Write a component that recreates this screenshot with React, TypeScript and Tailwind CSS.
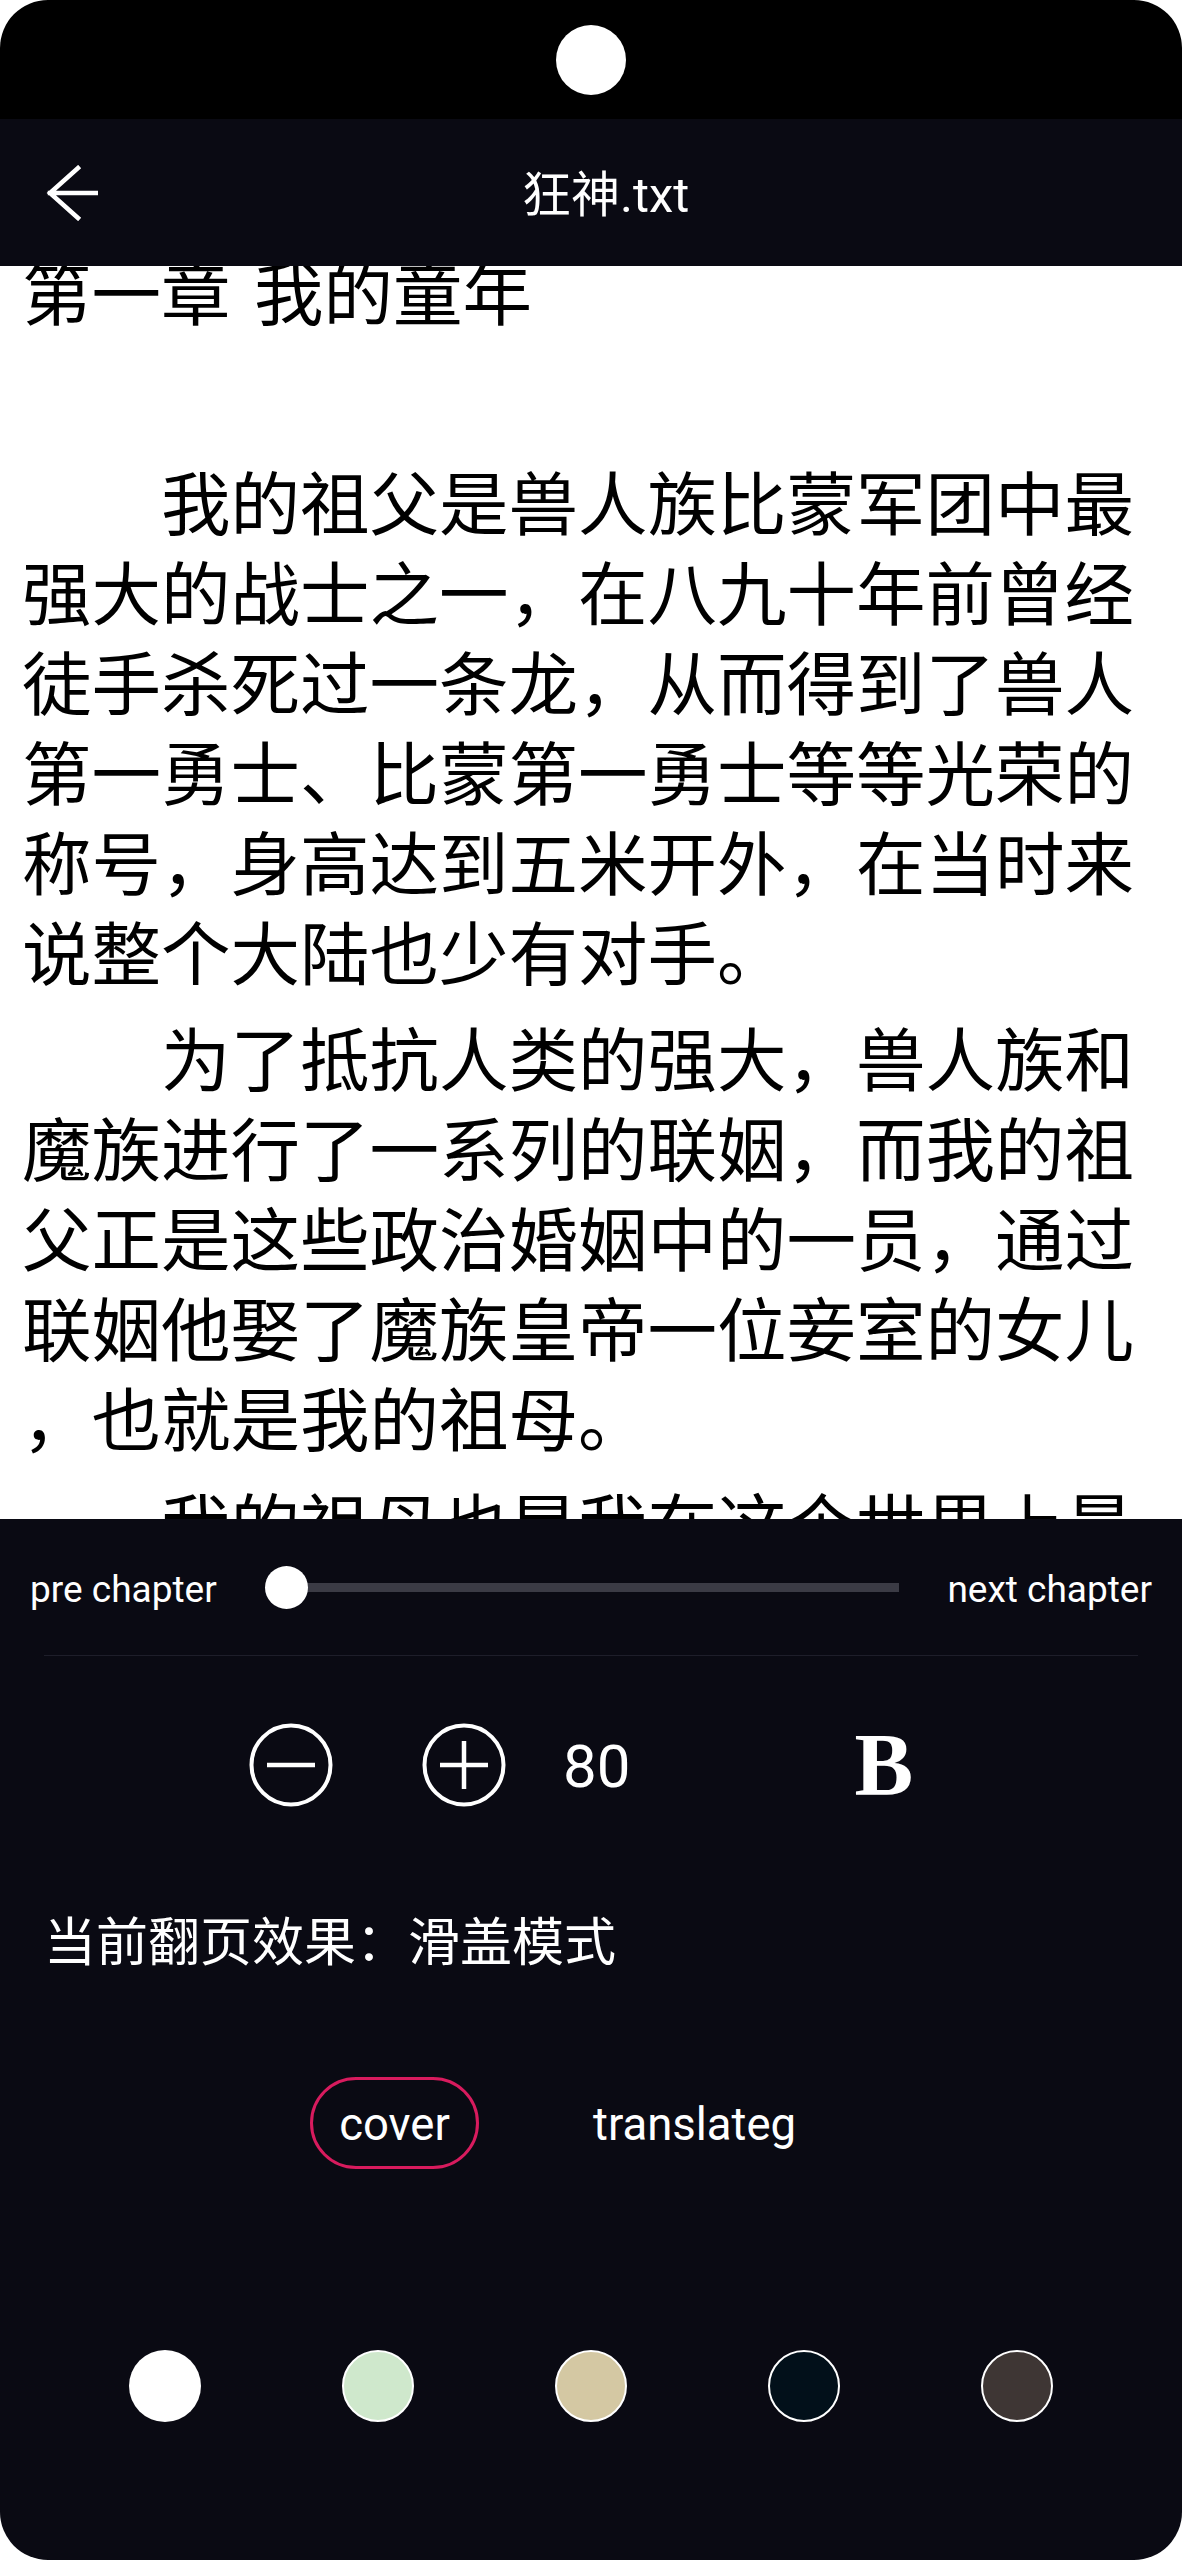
import React from "react";

const cjk = "font-['Noto_Sans_CJK_SC',sans-serif]";
const latin = "font-['Roboto','Noto_Sans_CJK_SC',sans-serif]";

const paragraphs = [
  "我的祖父是兽人族比蒙军团中最强大的战士之一，在八九十年前曾经徒手杀死过一条龙，从而得到了兽人第一勇士、比蒙第一勇士等等光荣的称号，身高达到五米开外，在当时来说整个大陆也少有对手。",
  "为了抵抗人类的强大，兽人族和魔族进行了一系列的联姻，而我的祖父正是这些政治婚姻中的一员，通过联姻他娶了魔族皇帝一位妾室的女儿，也就是我的祖母。",
  "我的祖母也是我在这个世界上最",
];

const swatches = [
  { bg: "bg-white", ring: "" },
  { bg: "bg-[#cfe8cc]", ring: "border-[2px] border-white" },
  { bg: "bg-[#d4c8a3]", ring: "border-[2px] border-white" },
  { bg: "bg-[#02101a]", ring: "border-[2px] border-white" },
  { bg: "bg-[#3e3634]", ring: "border-[2px] border-white" },
];

function BackArrow() {
  return (
    <svg width="52" height="56" viewBox="0 0 52 56" className="ml-[46px]">
      <path
        d="M32 3 L4 28 L32 53 M4 28 H50"
        fill="none"
        stroke="white"
        strokeWidth="4.5"
        strokeLinecap="square"
        strokeLinejoin="miter"
      />
    </svg>
  );
}

function CircleIcon({ plus }: { plus?: boolean }) {
  return (
    <svg width="84" height="84" viewBox="0 0 84 84">
      <circle cx="42" cy="42" r="39.5" fill="none" stroke="white" strokeWidth="4" />
      <line x1="18" y1="42" x2="66" y2="42" stroke="white" strokeWidth="4.5" />
      {plus && <line x1="42" y1="18" x2="42" y2="66" stroke="white" strokeWidth="4.5" />}
    </svg>
  );
}

export default function App() {
  return (
    <div className="w-[1182px] h-[2560px] bg-white">
      <div className="w-full h-full rounded-[48px] overflow-hidden flex flex-col">
        {/* status bar */}
        <div className="h-[119px] bg-black flex items-center justify-center shrink-0">
          <div className="w-[70px] h-[70px] rounded-full bg-white" />
        </div>

        {/* toolbar */}
        <div className="h-[147px] bg-[#0a0a13] flex items-center shrink-0">
          <BackArrow />
          <span className={`ml-[424px] mt-[5px] text-white text-[49px] leading-none ${latin}`}>
            狂神.txt
          </span>
        </div>

        {/* page text */}
        <div className="h-[1253px] bg-white overflow-hidden shrink-0">
          <div
            className={`-mt-[21px] pl-[22px] w-[1145px] text-black text-[69.5px] leading-[90px] [line-break:anywhere] ${cjk}`}
          >
            <p className="mb-[14px] [word-spacing:8px]">第一章 我的童年</p>
            <p className="mb-[16px] h-[90px]"></p>
            {paragraphs.map((t, i) => (
              <p key={i} className="mb-[16px] indent-[2em]">
                {t}
              </p>
            ))}
          </div>
        </div>

        {/* settings panel */}
        <div className="flex-1 bg-[#0a0a13] flex flex-col text-white">
          <div className={`h-[136px] flex items-center px-[30px] text-[37px] leading-none ${latin}`}>
            <span className="mt-[4px]">pre chapter</span>
            <div className="relative flex-1 mx-[48px] h-[43px] flex items-center">
              <div className="ml-[22px] flex-1 h-[9px] bg-[#3b3b45]" />
              <div className="absolute left-0 top-0 w-[43px] h-[43px] rounded-full bg-white" />
            </div>
            <span className="mt-[4px]">next chapter</span>
          </div>

          <div className="mx-[44px] h-px bg-[#1e1e2a]" />

          <div className="h-[218px] flex items-center">
            <div className="ml-[249px]">
              <CircleIcon />
            </div>
            <div className="ml-[89px]">
              <CircleIcon plus />
            </div>
            <span className={`ml-[57px] mt-[4px] text-[60px] leading-none ${latin}`}>80</span>
            <span className="ml-[224px] text-[88px] leading-none font-bold font-['Liberation_Serif',serif]">
              B
            </span>
          </div>

          <div className={`h-[130px] flex items-center pl-[44px] text-[52px] leading-none ${cjk}`}>
            当前翻页效果：滑盖模式
          </div>

          <div className={`h-[238px] flex items-center text-[45.5px] leading-none ${latin}`}>
            <div className="ml-[310px] w-[169px] h-[92px] rounded-full border-[3px] border-[#d81b5e] flex items-center justify-center">
              <span className="mt-[4px]">cover</span>
            </div>
            <span className="ml-[114px] mt-[4px]">translateg</span>
          </div>

          <div className="h-[288px] grid grid-cols-5 items-center px-[58px]">
            {swatches.map((s, i) => (
              <div
                key={i}
                className={`justify-self-center w-[72px] h-[72px] rounded-full ${s.bg} ${s.ring}`}
              />
            ))}
          </div>
        </div>
      </div>
    </div>
  );
}
